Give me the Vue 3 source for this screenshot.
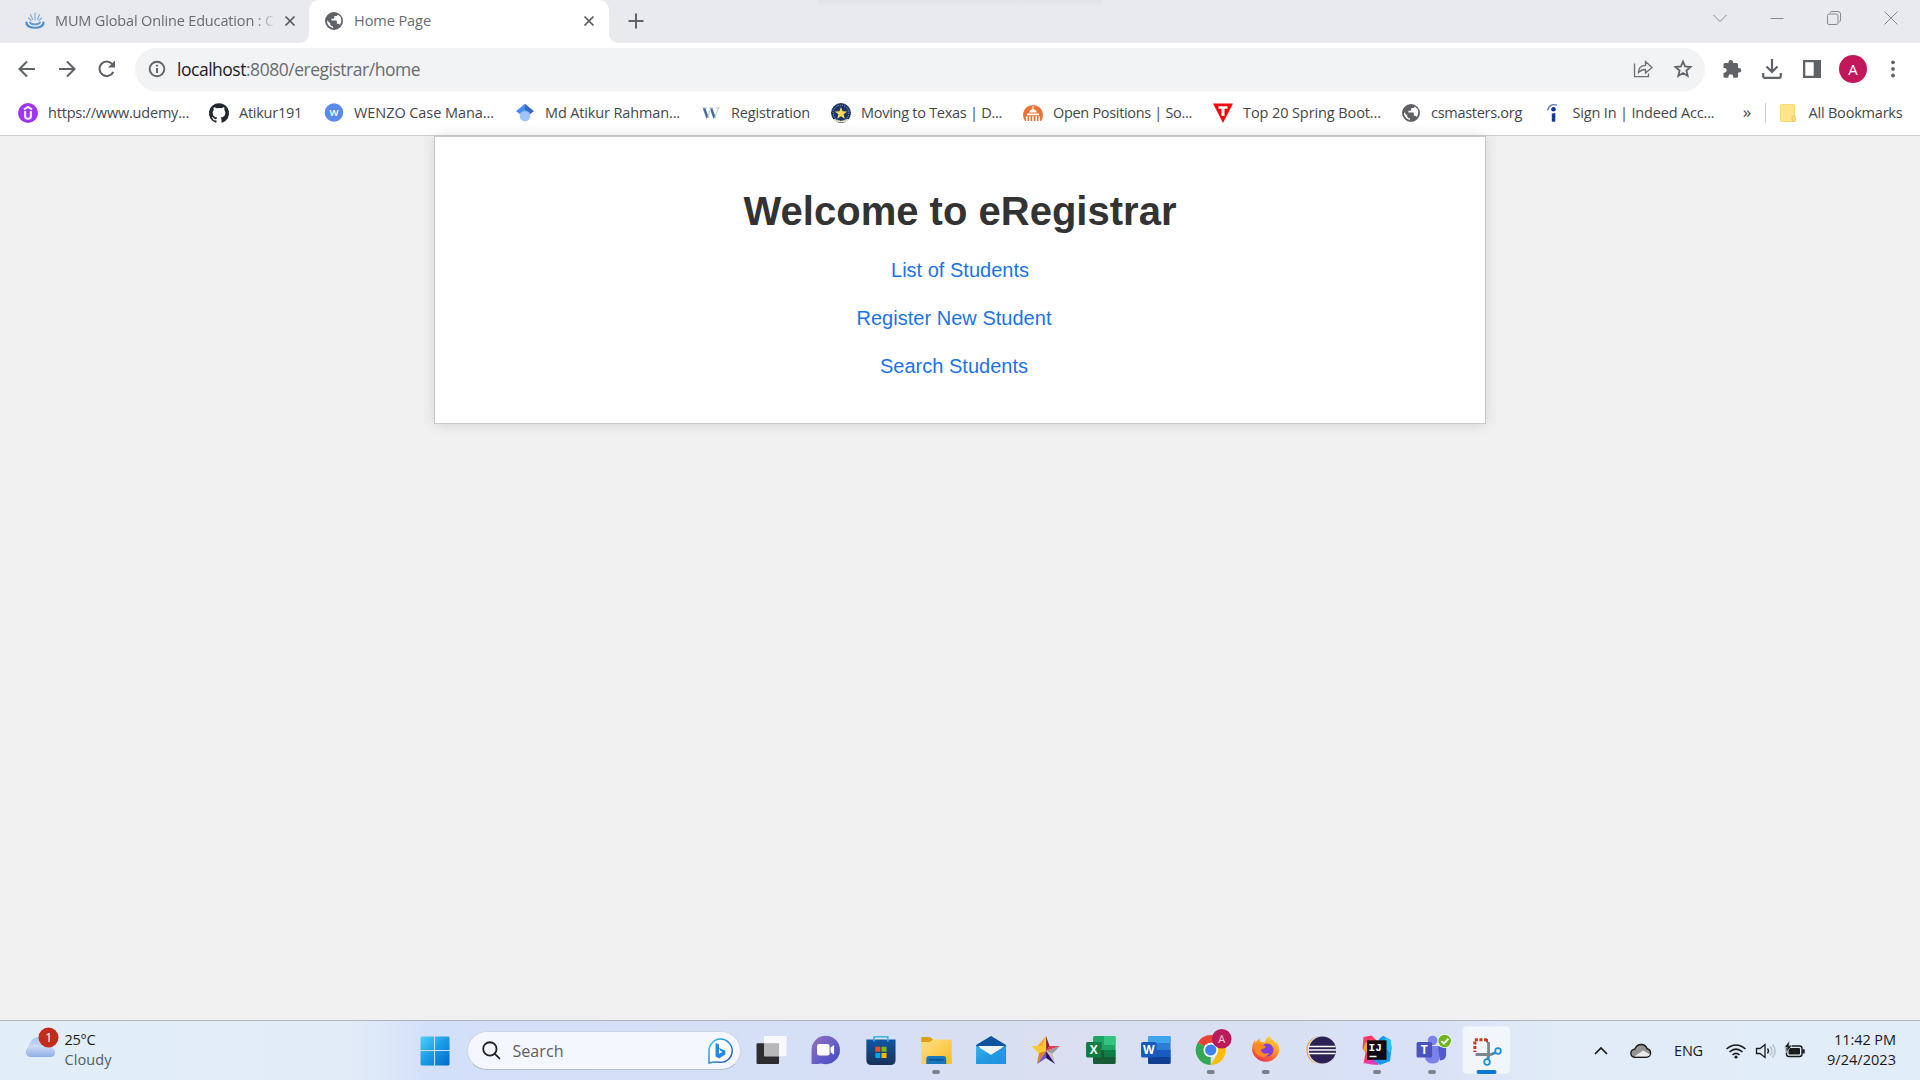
<script setup>
const fitText = (el, { value }) => {
  const range = document.createRange()
  range.selectNodeContents(el)
  const natural = range.getBoundingClientRect().width
  el.style.letterSpacing = `${(value - natural) / el.textContent.length}px`
}
const vFit = { mounted: fitText }

const bookmarks = [
  { icon: 'udemy', label: 'https://www.udemy...', text: 141, width: 191 },
  { icon: 'github', label: 'Atikur191', text: 63, width: 115 },
  { icon: 'wenzo', label: 'WENZO Case Mana...', text: 140, width: 191 },
  { icon: 'scholar', label: 'Md Atikur Rahman...', text: 135, width: 186 },
  { icon: 'w', label: 'Registration', text: 79, width: 130 },
  { icon: 'texas', label: 'Moving to Texas | D...', text: 141, width: 192 },
  { icon: 'capitol', label: 'Open Positions | So...', text: 139, width: 190 },
  { icon: 'top', label: 'Top 20 Spring Boot...', text: 138, width: 188 },
  { icon: 'globe', label: 'csmasters.org', text: 91, width: 141.5 },
  { icon: 'indeed', label: 'Sign In | Indeed Acc...', text: 142, width: 196 },
]
const links = [
  { label: 'List of Students', text: 138, shift: 0 },
  { label: 'Register New Student', text: 195, shift: 12 },
  { label: 'Search Students', text: 148, shift: 12 },
]
const globePath =
  'M10 1a9 9 0 1 0 0 18 9 9 0 0 0 0-18zM3 9.3l3.3 3.2v1.1c0 .8.8 1.6 1.7 1.6h1v1.7A7 7 0 0 1 3 9.3zM15.7 14c-.4-.8-1-1.2-1.8-1.2h-1v-2.4c0-.5-.4-.9-.9-.9H7.4V7.700h2c.5 0 .9-.4.9-.9V5h1.800c.9 0 1.700-.8 1.700-1.600A7 7 0 0 1 15.700 14z'
</script>

<template>
  <div class="screen">
    <header class="tabs">
      <div class="tab first">
        <svg class="fav" viewBox="0 0 20 20" width="20" height="20">
          <g fill="none" stroke="#7fb0dc" stroke-width="1.2" stroke-linecap="round">
            <path d="M10 9V2M7.600 8.500 5.500 3.500M12.400 8.500l2.100-5M6 9.500 3.500 7M14 9.500 16.500 7" />
            <path d="M5 11.500c1.500 2.500 8.500 2.500 10 0" stroke="#5c9bd4" stroke-width="1.800" />
            <path d="M1.500 11.500C1 18.500 19 18.500 18.500 11.500" stroke="#4a90cf" stroke-width="2.200" />
          </g>
        </svg>
        <span class="tabtext fade" v-fit="219">MUM Global Online Education : C</span>
        <svg class="x" viewBox="0 0 12 12" width="12" height="12"><path d="M1.500 1.500l9 9M10.500 1.500l-9 9" /></svg>
      </div>
      <div class="tab active">
        <svg class="fav" viewBox="0 0 20 20" width="20" height="20"><path :d="globePath" fill="#5f6368" /></svg>
        <span class="tabtext" v-fit="77">Home Page</span>
        <svg class="x" viewBox="0 0 12 12" width="12" height="12"><path d="M1.500 1.500l9 9M10.500 1.500l-9 9" /></svg>
      </div>
      <svg class="plus" viewBox="0 0 16 16" width="16" height="16"><path d="M8 .5v15M.5 8h15" /></svg>
      <div class="winbtns">
        <svg viewBox="0 0 14 14" width="14" height="14"><path d="M.5 4 7 10.500 13.500 4" /></svg>
        <svg viewBox="0 0 14 14" width="14" height="14"><path d="M.5 7.500h13" /></svg>
        <svg viewBox="0 0 14 14" width="14" height="14"><rect x=".5" y="3" width="10.500" height="10.500" rx="1.500" /><path d="M3 1.800Q3.500.5 5 .5h6q2.500 0 2.500 2.500v6q0 1.500-1.200 2" /></svg>
        <svg viewBox="0 0 14 14" width="14" height="14"><path d="M.5.5l13 13M13.500.5l-13 13" /></svg>
      </div>
      <div class="notch"></div>
    </header>

    <div class="toolbar">
      <svg class="nav" viewBox="0 0 20 20" width="20" height="20"><path d="M18 10H3M10 2.500 2.500 10l7.500 7.500" /></svg>
      <svg class="nav" viewBox="0 0 20 20" width="20" height="20"><path d="M2 10h15M10 2.500l7.500 7.500-7.500 7.500" /></svg>
      <svg class="nav" viewBox="0 0 20 20" width="20" height="20"><path d="M16.300 13A7.300 7.300 0 1 1 15.500 5.200" /><path d="M18 1.500V8.500H11z" fill="#5f6368" stroke="none" /></svg>
      <div class="omnibox">
        <svg class="info" viewBox="0 0 18 18" width="18" height="18"><circle cx="9" cy="9" r="7.300" /><path d="M9 8v5M9 4.800v1.800" /></svg>
        <span class="url" v-fit="243"><b>localhost</b>:8080/eregistrar/home</span>
        <svg class="share" viewBox="0 0 20 20" width="20" height="20"><path d="M1.500 4.500V17.700H15.500V14.500" /><path d="M5.500 13.500C5.500 8.500 8 6.500 12.500 6.300V2.500L19 8.500 12.500 14V10.500C9.500 10.500 7.500 11.200 5.500 13.500z" /></svg>
        <svg class="star" viewBox="0 0 20 20" width="20" height="20"><path d="M10 2.500l2.100 5 5.500.5-4.200 3.600 1.300 5.300L10 14.100l-4.700 2.800 1.300-5.300L2.400 8l5.500-.5z" /></svg>
      </div>
      <div class="actions">
        <svg viewBox="0 0 20 20" width="20" height="20"><path fill="#5f6368" d="M1.500 5.500q0-1.500 1.500-1.500h3.500V3.200a2.300 2.300 0 0 1 4.600 0V4h3.500q1.500 0 1.500 1.500V9h.9a2.300 2.300 0 0 1 0 4.600h-.9v3.600q0 1.500-1.500 1.500h-3.400v-1a2.400 2.400 0 0 0-4.800 0v1H3q-1.500 0-1.500-1.500v-3.500h.8a2.400 2.400 0 0 0 0-4.800h-.8z" /></svg>
        <svg viewBox="0 0 20 20" width="20" height="20"><path d="M10 0v12M4.500 7.500 10 13l5.500-5.500M1.200 14v3q0 1.800 1.800 1.800h14q1.800 0 1.800-1.800v-3" fill="none" stroke="#5f6368" stroke-width="2.200" /></svg>
        <svg viewBox="0 0 20 20" width="20" height="20"><path fill="#5f6368" fill-rule="evenodd" d="M1 1h18v18H1zM3.300 3.300v13.400h8.400V3.300z" /></svg>
        <span class="avatar">A</span>
        <svg viewBox="0 0 20 20" width="20" height="20" fill="#5f6368"><circle cx="10" cy="3.300" r="1.900" /><circle cx="10" cy="9.900" r="1.900" /><circle cx="10" cy="16.500" r="1.900" /></svg>
      </div>
    </div>

    <nav class="bookmarks">
      <div v-for="b in bookmarks" :key="b.icon" class="bookmark" :style="{ width: b.width + 'px' }">
        <svg viewBox="0 0 20 20" width="20" height="20">
          <template v-if="b.icon === 'udemy'">
            <circle cx="10" cy="10" r="10" fill="#a034f0" />
            <path d="M6 6.500 10 4l4 2.500M7.200 8v5.500q0 2.300 2.800 2.300t2.800-2.300V8" fill="none" stroke="#fff" stroke-width="2" />
          </template>
          <path v-else-if="b.icon === 'github'" fill="#24292f" d="M10 .2a10 10 0 0 0-3.200 19.500c.5.1.7-.2.7-.5v-1.800c-2.700.6-3.400-1.200-3.400-1.200-.4-1.100-1.100-1.500-1.100-1.500-.9-.6.1-.6.1-.6 1 .1 1.500 1 1.500 1 .9 1.600 2.400 1.100 3 .9.100-.7.300-1.100.6-1.400-2.200-.3-4.500-1.100-4.500-5 0-1.100.4-2 1-2.700-.1-.2-.4-1.200.1-2.600 0 0 .8-.3 2.700 1a9.400 9.400 0 0 1 5 0c1.900-1.300 2.700-1 2.700-1 .5 1.400.2 2.400.1 2.600.6.700 1 1.600 1 2.700 0 3.900-2.300 4.700-4.500 5 .4.300.7.900.7 1.900v2.700c0 .3.200.6.700.5A10 10 0 0 0 10 .2z" />
          <template v-else-if="b.icon === 'wenzo'">
            <circle cx="10" cy="9.500" r="9.300" fill="#5b8bea" />
            <text x="10" y="13" text-anchor="middle" font-size="9.500" font-weight="600" fill="#fff">W</text>
          </template>
          <template v-else-if="b.icon === 'scholar'">
            <path d="M1 8.200 10 .8v14z" fill="#4b8bf4" />
            <path d="M19 8.200 10 .8v14z" fill="#356ac3" />
            <circle cx="10" cy="13" r="5.400" fill="#a0c3ff" />
            <path d="M5 11a5.500 5.500 0 0 1 10 0c-1.500-3.500-8-3.500-10 0z" fill="#76a7fa" />
          </template>
          <g v-else-if="b.icon === 'w'" fill="none">
            <path d="M3 5 6.500 15M10 5l3.500 10" stroke="#4d6d97" stroke-width="2.500" />
            <path d="M6.500 15 9.500 6M13.500 15l4-10M1 5h5M8.500 5h4M15 5h4" stroke="#b9c6d6" stroke-width="1" />
          </g>
          <template v-else-if="b.icon === 'texas'">
            <circle cx="10" cy="10" r="9.400" fill="#19366d" stroke="#17294e" />
            <circle cx="10" cy="10" r="7.800" fill="none" stroke="#a9b3c6" stroke-dasharray="1 1.200" />
            <path d="M3 16.500Q10 21 17 16.500" fill="none" stroke="#e4dfbb" stroke-width="1.700" />
            <path d="M10 4l1.600 4.200 4.600.2-3.600 2.900 1.200 4.400L10 13.200l-3.800 2.500 1.200-4.400-3.600-2.900 4.600-.2z" fill="#f9d85c" />
          </template>
          <template v-else-if="b.icon === 'capitol'">
            <path d="M2 18A10 10 0 1 1 18 18z" fill="#ed7135" />
            <path d="M9.500 3h1v3q3 .7 3.500 3.500H6q.5-2.800 3.500-3.500zM4 10.500h12v1.800H4zM3 13.300h1.500V18H3zM6 13.300h1.500V18H6zM9.200 13.300h1.500V18H9.200zM12.400 13.300h1.500V18h-1.500zM15.500 13.300H17V18h-1.500z" fill="#fff" />
          </template>
          <template v-else-if="b.icon === 'top'">
            <path d="M0 .5h20L10 20z" fill="#f4070d" />
            <path d="M5.500 3.200h9v2.600h-3V13h-3V5.800h-3z" fill="#fff" />
          </template>
          <path v-else-if="b.icon === 'globe'" :d="globePath" fill="#5f6368" />
          <g v-else-if="b.icon === 'indeed'" fill="#12389a">
            <circle cx="10.500" cy="6.300" r="2.300" />
            <path d="M8.800 10.300q1.800.5 3.500-.6v8.500q-1.700 1-3.500 0z" />
            <path d="M4.500 7.500Q6.500 0 14 2.200" fill="none" stroke="#5878b0" stroke-width="1.300" />
          </g>
        </svg>
        <span v-fit="b.text">{{ b.label }}</span>
      </div>
      <span class="more">»</span>
      <i class="sep"></i>
      <svg class="folder" viewBox="0 0 16 18" width="16" height="18"><rect x=".5" y=".5" width="14" height="17" rx="1" fill="#ffe48a" stroke="#f5d978" /><rect x="12" y="12" width="3.500" height="5.500" rx="1.500" fill="#ffdf72" stroke="#e3bd48" stroke-width=".7" /></svg>
      <span v-fit="94">All Bookmarks</span>
    </nav>

    <main class="page">
      <section class="card">
        <h1 v-fit="433">Welcome to eRegistrar</h1>
        <p v-for="l in links" :key="l.label" :style="{ paddingRight: l.shift + 'px' }"><a v-fit="l.text">{{ l.label }}</a></p>
      </section>
    </main>

    <footer class="taskbar">
      <div class="weather">
        <svg viewBox="0 0 34 34" width="34" height="34">
          <defs>
            <linearGradient id="cl" x2="0" y2="1"><stop stop-color="#a9c3ee" /><stop offset="1" stop-color="#d5e2f8" /></linearGradient>
            <linearGradient id="cl2" x2="0" y2="1"><stop stop-color="#d5e2f8" /><stop offset="1" stop-color="#8faee6" /></linearGradient>
          </defs>
          <path d="M5 22a6 6 0 0 1 1-6 9.500 9.500 0 0 1 17-1q7 2 6 9z" fill="url(#cl)" />
          <path d="M6 30a5.500 5.500 0 0 1 1-10.800q5-3.500 9 .5 3-2 6 .8h4q5 .5 5 5 0 4-4 4.500z" fill="url(#cl2)" />
          <circle cx="24.500" cy="10.500" r="10" fill="#c42b1c" />
          <text x="24.600" y="15.300" text-anchor="middle" font-size="13" fill="#fff">1</text>
        </svg>
        <div class="forecast"><span v-fit="31">25°C</span><em v-fit="47">Cloudy</em></div>
      </div>

      <svg class="start" viewBox="0 0 30 30" width="30" height="30">
        <defs><linearGradient id="win" x2="1" y2="1"><stop stop-color="#4cd2fb" /><stop offset=".5" stop-color="#1c9ae6" /><stop offset="1" stop-color="#0068c8" /></linearGradient></defs>
        <path fill="url(#win)" d="M1.500.5H14V14H.5V1.500zM15 .5h13.500l1 1V14H15zM.5 15H14v14.500H1.500l-1-1zM15 15h14.500v13.500l-1 1H15z" />
      </svg>

      <div class="search">
        <svg viewBox="0 0 20 20" width="19" height="19"><circle cx="8.300" cy="8.300" r="7" /><path d="M13.300 13.300l5.500 5.500" /></svg>
        <span v-fit="51">Search</span>
        <svg class="bing" viewBox="0 0 26 26" width="26" height="26">
          <defs><linearGradient id="bing" x2="1" y2="1"><stop stop-color="#2fc5f2" /><stop offset="1" stop-color="#2050b8" /></linearGradient></defs>
          <path d="M2 25.000V13A11.600 11.600 0 1 1 13.500 24.300Q7 23.500 2 25z" fill="#fff" stroke="url(#bing)" stroke-width="1.500" />
          <path d="M8.500 5l3.500 1.300v9.500l3.500-1.800-2.300-1.200-1.300-3 6.500 3v3.600L12 20.500l-3.500-2z" fill="#258be0" />
        </svg>
      </div>

      <div class="apps">
        <svg viewBox="0 0 55 59">
          <rect x="13.500" y="22.300" width="22.500" height="20.700" rx="1" fill="#2d2d2f" />
          <rect x="21" y="15" width="22.500" height="20.300" rx="1" fill="#fff" opacity=".82" />
          <rect x="21" y="22.300" width="15" height="13" fill="#b8b8ba" />
        </svg>
        <svg viewBox="0 0 55 59">
          <defs><linearGradient id="chat" x2="1" y2="1"><stop stop-color="#9a70b8" /><stop offset=".5" stop-color="#6a5fc8" /><stop offset="1" stop-color="#3d48c2" /></linearGradient></defs>
          <path d="M13.500 43V29a14.200 14.200 0 1 1 14.500 14.200q-2.500 0-5-.8-4 1-9.500.6z" fill="url(#chat)" />
          <rect x="19" y="23" width="12.500" height="11.500" rx="2" fill="#fff" />
          <path d="M32.500 26.500l3.500-2.500v9.800l-3.500-2.500z" fill="#fff" />
        </svg>
        <svg viewBox="0 0 55 59">
          <defs><linearGradient id="store" x2="0" y2="1"><stop stop-color="#0f58a5" /><stop offset="1" stop-color="#173158" /></linearGradient></defs>
          <path d="M13.300 18.500h29.200V39q0 5-5 5H18.300q-5 0-5-5z" fill="url(#store)" />
          <path d="M21 20.500v-4.700h13.800v4.700" fill="none" stroke="#35b8ee" stroke-width="1.600" />
          <path d="M22.300 25.700h5v5h-5z" fill="#f25022" /><path d="M28.500 25.700h5v5h-5z" fill="#7fba00" />
          <path d="M22.300 32h5v5h-5z" fill="#00a4ef" /><path d="M28.500 32h5v5h-5z" fill="#ffb900" />
        </svg>
        <svg viewBox="0 0 55 59">
          <defs><linearGradient id="fold" x2="1" y2="1"><stop stop-color="#ffe084" /><stop offset="1" stop-color="#f8bd28" /></linearGradient></defs>
          <path d="M13.200 17q0-1 1-1H22l3.500 3v4H13.200z" fill="#dca010" />
          <path d="M13.200 21h8.500l3.500-2.500h17q1.500 0 1.500 1.500v23H13.200z" fill="url(#fold)" />
          <path d="M18.200 43v-5q0-3 3-3h14q3 0 3 3v5z" fill="#1975bd" /><path d="M21 38.800h14.500" stroke="#0b4e8e" stroke-width="1.500" />
          <rect class="dot" x="24" y="49" width="8" height="4" rx="2" />
        </svg>
        <svg viewBox="0 0 55 59">
          <defs><linearGradient id="mail" x2="1" y2="1"><stop stop-color="#35b9ef" /><stop offset="1" stop-color="#1377cc" /></linearGradient></defs>
          <path d="M13 24 28 15l15 9v3H13z" fill="#0c53a0" /><path d="M15 25h26L28 38z" fill="#f2f2f2" />
          <path d="M13 24.500 28 34l15-9.500V43H13z" fill="url(#mail)" /><path d="M13 43 43 24.500V43z" fill="#229be5" opacity=".7" />
        </svg>
        <svg viewBox="0 0 55 59">
          <path d="M28 15v15l-8.500-5z" fill="#f5a623" /><path d="M28 15l3.500 10-3.500 5z" fill="#9c1c38" />
          <path d="M28 15l-4 10 4 5z" fill="#fbc92d" /><path d="M13.700 25h10.500L28 30l-7 3z" fill="#fbc92d" /><path d="M31.500 25H42l-14 5z" fill="#e13a54" />
          <path d="M42 25l-7.500 7.500L28 30z" fill="#a09898" /><path d="M34.500 32.500 37 43l-9-13z" fill="#c8c0c0" />
          <path d="M28 30v7l9 6z" fill="#281058" /><path d="M28 30v7l-9 6z" fill="#7352d8" /><path d="M28 30l-9 13 2-11z" fill="#e08122" />
        </svg>
        <svg viewBox="0 0 55 59">
          <rect x="20" y="15" width="22.500" height="28" rx="1.500" fill="#21a366" /><path d="M31 15h10q1.500 0 1.500 1.500V24H31z" fill="#33c481" />
          <path d="M20 29h11v7H20z" fill="#185c37" /><path d="M31 29h11.500v7H31z" fill="#107c41" /><path d="M20 36h22.500v5.500q0 1.500-1.500 1.500H21.500q-1.500 0-1.500-1.500z" fill="#185c37" />
          <rect x="13" y="21" width="15.500" height="15.500" rx="1.500" fill="#107c41" /><text x="20.700" y="33" class="badge">X</text>
        </svg>
        <svg viewBox="0 0 55 59">
          <rect x="20" y="15" width="22.500" height="28" rx="1.500" fill="#2b7cd3" /><path d="M20 22v-5.500q0-1.500 1.500-1.500H41q1.500 0 1.500 1.500V22z" fill="#41a5ee" />
          <path d="M20 29h22.500v7H20z" fill="#185abd" /><path d="M20 36h22.500v5.500q0 1.500-1.500 1.500H21.500q-1.500 0-1.500-1.500z" fill="#103f91" />
          <rect x="13" y="21" width="15.500" height="15.500" rx="1.500" fill="#185abd" /><text x="20.700" y="33" class="badge">W</text>
        </svg>
        <svg viewBox="0 0 55 59">
          <path d="M27.700 29 14.700 21.500a15 15 0 0 1 26 0z" fill="#ea4335" />
          <path d="M27.700 14a15 15 0 0 1 13 7.500H27.700z" fill="#ea4335" />
          <path d="M14.700 21.500 27.700 29l0 15a15 15 0 0 1-13-22.500z" fill="#34a853" />
          <path d="M27.700 21.500h13a15 15 0 0 1-13 22.500l6.500-11z" fill="#fbbc05" />
          <circle cx="27.700" cy="29" r="7.300" fill="#fff" /><circle cx="27.700" cy="29" r="5.600" fill="#3c82f0" />
          <circle cx="38.700" cy="17.800" r="9.800" fill="#b81a5a" /><text x="38.700" y="22" text-anchor="middle" font-size="11" fill="#f4cede">A</text>
          <rect class="dot" x="23.700" y="49" width="8" height="4" rx="2" />
        </svg>
        <svg viewBox="0 0 55 59">
          <defs><linearGradient id="fox" x1=".8" y1="0" x2=".3" y2="1"><stop stop-color="#ffe23c" /><stop offset=".45" stop-color="#ff9825" /><stop offset="1" stop-color="#f0304c" /></linearGradient></defs>
          <path d="M14 29q0-6 3-10l.5 3q1-3 4-4.500l1 3.500 4 .2Q28 17 31.500 14.500q1 3.500 5 6l1.500 2.500.2-2.800q3 4 3 9.500a13.800 13.800 0 0 1-27.200-.7z" fill="url(#fox)" />
          <circle cx="29" cy="29" r="6.500" fill="#8040d8" /><path d="M17 23.500q5-1 9 1 3 1 .5 2.700l-4 1.600q2 5.500 9 3.200-6 7-12.500 1.500Q15 29.500 17 23.500z" fill="#ff8a22" />
          <rect class="dot" x="23.700" y="49" width="8" height="4" rx="2" />
        </svg>
        <svg viewBox="0 0 55 59">
          <circle cx="27" cy="29" r="13.700" fill="#f59b27" /><circle cx="28.500" cy="29" r="14" fill="#e0def0" /><circle cx="29.400" cy="29" r="13.600" fill="#2c2255" />
          <path d="M16 25.500h26.500M15.500 29h27.500M16 32.500h26.500" stroke="#fff" stroke-width="1.700" />
        </svg>
        <svg viewBox="0 0 55 59">
          <path d="M14.500 16l8-1.500 6 6-3 18-11 4 2-11-3-4z" fill="#fb3868" /><path d="M14.500 42l12-5 3 7-7-.5z" fill="#e23cba" />
          <path d="M16 22 14 29l6 4 3-15z" fill="#fca31e" />
          <path d="M30 18l4-3.300 7.500 4.300 1 8-1.500 13-10 4-7-5z" fill="#1899ee" /><path d="M36 17l5.500 2 1 8-1.500 5-6-7z" fill="#29c5f4" />
          <rect x="18" y="19.300" width="19.500" height="19.500" fill="#100b12" />
          <text x="19.500" y="29.500" font-family="'Liberation Mono', monospace" font-size="11" font-weight="700" fill="#fff">IJ</text><path d="M20.500 35.500h7" stroke="#fff" stroke-width="1.500" />
          <rect class="dot" x="24" y="49" width="8" height="4" rx="2" />
        </svg>
        <svg viewBox="0 0 55 59">
          <circle cx="28.500" cy="19.500" r="4.800" fill="#7b83eb" /><path d="M21 25h15v10q0 7.500-7 7.500t-8-6z" fill="#7b83eb" />
          <path d="M34 26h8v9q-1 4-6 4.500z" fill="#5059c9" />
          <rect x="12.500" y="21" width="15.500" height="15.500" rx="1.500" fill="#4b53bc" /><text x="20.200" y="33" class="badge">T</text>
          <circle cx="40.600" cy="20" r="7" fill="#fff" /><circle cx="40.600" cy="20" r="6.300" fill="#6fb51d" /><path d="M37.300 20l2.500 2.700 4.500-5" fill="none" stroke="#fff" stroke-width="1.800" />
          <rect class="dot" x="24" y="49" width="8" height="4" rx="2" />
        </svg>
        <svg viewBox="0 0 55 59">
          <rect x="3.500" y="5" width="48" height="48" rx="4" fill="#f1f5fc" stroke="#e3e9f5" />
          <path d="M28 18.800H15.800V31" fill="none" stroke="#c33a1c" stroke-width="3" stroke-dasharray="3 1.600" /><path d="M28 18v3.500" stroke="#c33a1c" stroke-width="2" />
          <path d="M29.500 21v14l-1 3M16.500 33.500h15l5-1.800" fill="none" stroke="#80868e" stroke-width="2.800" />
          <g fill="none" stroke="#1a92d8" stroke-width="1.800"><circle cx="39" cy="30" r="2.800" /><circle cx="28" cy="41" r="2.800" /><path d="M36.500 31.500 33 33M29 38.500l.8-3" /></g>
          <rect x="17.500" y="49" width="20" height="4" rx="2" fill="#0a78d0" />
        </svg>
      </div>

      <div class="tray">
        <svg viewBox="0 0 14 20" width="14" height="20"><path d="M1 13l6-6 6 6" stroke-width="1.700" /></svg>
        <svg class="od" viewBox="0 0 22 20" width="22" height="20"><path d="M5 16.200a4 4 0 0 1-.3-8Q7 3 12 3.500q4 .5 5 4.200 4 .8 3.500 5-.7 3.500-4 3.500z" fill="#949494" stroke-width="1.400" /><path d="M4.500 15.500 13 9.500l7 4q-1 2-3.500 2z" fill="#eceaea" stroke="none" /></svg>
        <span class="eng" v-fit="29">ENG</span>
        <svg class="wifi" viewBox="0 0 22 20" width="22" height="20"><path d="M1.500 8q9.500-8 19 0M4.500 11q6.500-5.700 13 0M7.500 14q3.500-3.200 7 0" stroke-width="1.500" /><circle cx="11" cy="16" r="1.600" fill="#1a1a1a" stroke="none" /></svg>
        <svg class="vol" viewBox="0 0 22 20" width="22" height="20"><path d="M1.500 7.500h3.500L10 3.500v13L5 12.500H1.500zM12.500 7.500q2 2.500 0 5" stroke-width="1.300" /><path d="M15 5.500q4 4.500 0 9M17.500 3.500q5.500 6.500 0 13" stroke="#b1bdc9" stroke-width="1.300" /></svg>
        <svg class="bat" viewBox="0 0 22 20" width="22" height="20"><rect x="2.500" y="5" width="15.500" height="10.500" rx="2.500" stroke-width="1.400" /><rect x="4.500" y="7" width="11.500" height="6.500" rx="1" fill="#1a1a1a" stroke="none" /><path d="M19.500 8.300v4.200" stroke-width="2.400" /><path d="M5.500-.5.300 6.500h3L1.800 12 8 4.800H5z" fill="#1a1a1a" stroke="#e2edf8" stroke-width=".6" /></svg>
        <div class="clock"><span v-fit="62">11:42 PM</span><span v-fit="69">9/24/2023</span></div>
      </div>
    </footer>
  </div>
</template>

<style>
body { margin: 0; overflow: hidden; }
</style>

<style scoped>
.screen { width: 1920px; height: 1080px; display: flex; flex-direction: column; background: #f0f0f0; font-family: "Open Sans", "Noto Sans", sans-serif; font-size: 14.5px; color: #44474a; overflow: hidden; white-space: nowrap; }
svg { display: block; flex: none; overflow: visible; }
.tabs { position: relative; height: 43px; flex: none; display: flex; background: #e8eaed; }
.notch { position: absolute; left: 818px; top: 0; width: 284px; height: 7px; background: linear-gradient(#e2e4e7, #e8eaed); }
.tab { position: relative; box-sizing: border-box; height: 43px; display: flex; align-items: center; padding-bottom: 1px; color: #686c70; }
.first { width: 309px; padding-left: 25px; }
.active { width: 300px; padding-left: 15px; background: #fff; border-radius: 10px 10px 0 0; }
.active::before, .active::after { content: ""; position: absolute; bottom: 0; width: 10px; height: 10px; }
.active::before { left: -10px; background: radial-gradient(circle at 0 0, #e8eaed 9.5px, #fff 10.5px); }
.active::after { right: -10px; background: radial-gradient(circle at 100% 0, #e8eaed 9.5px, #fff 10.5px); }
.fav { margin-right: 10px; }
.tabtext { flex: 1; padding-bottom: 2px; }
.fade { -webkit-mask-image: linear-gradient(90deg, #000 200px, transparent 221px); mask-image: linear-gradient(90deg, #000 200px, transparent 221px); }
.x { fill: none; stroke: #55595d; stroke-width: 1.7; margin-right: 14.5px; }
.first .x { margin-right: 13px; }
.plus { margin: 13px 0 0 19px; fill: none; stroke: #5f6368; stroke-width: 2; }
.winbtns { margin: 11px 22px 0 auto; display: flex; gap: 43px; fill: none; stroke: #85888c; stroke-width: 1; }
.toolbar { height: 52px; flex: none; display: flex; align-items: center; background: #fff; }
.nav { margin-left: 17px; fill: none; stroke: #5f6368; stroke-width: 2.1; }
.nav + .nav { margin-left: 20px; }
.omnibox { box-sizing: border-box; width: 1570px; height: 43px; margin-left: 18px; display: flex; align-items: center; padding: 0 12px 0 13px; border-radius: 22px; background: #f1f3f4; }
.info { fill: none; stroke: #5f6368; stroke-width: 1.9; }
.url { flex: 1; margin-left: 11px; font-size: 17.5px; color: #686c70; }
.url b { font-weight: 400; color: #202124; }
.share { fill: none; stroke: #6b6f73; stroke-width: 1.3; margin-right: 20px; }
.star { fill: none; stroke: #5f6368; stroke-width: 1.8; }
.actions { display: flex; align-items: center; margin-left: 17px; gap: 20px; }
.avatar { width: 28px; height: 28px; margin: 0 -4px 0 -3px; border-radius: 50%; background: #c2185b; color: #fff; text-align: center; line-height: 28px; font-size: 15px; }
.bookmarks { box-sizing: border-box; height: 41px; flex: none; display: flex; align-items: center; padding: 0 0 5px 18px; background: #fff; border-bottom: 1px solid #cfcfcf; }
.bookmark { flex: none; display: flex; align-items: center; gap: 10px; }
.more { width: 17px; margin-right: 9px; font-size: 17px; line-height: 20px; text-align: center; margin-top: -2px; }
.sep { width: 1px; height: 20px; background: #c9ccd0; }
.folder { margin: 0 13px 0 14px; }
.page { flex: 1; min-height: 0; }
.card { box-sizing: border-box; width: 1052px; height: 288px; margin: 0 auto; padding-top: 50px; background: #fff; border: 1px solid #c8c8c8; box-shadow: 0 0 12px rgba(0, 0, 0, .12); font-family: "Liberation Sans", Arial, sans-serif; text-align: center; }
h1 { margin: 0 0 12px; font-size: 40px; line-height: 48px; font-weight: 700; color: #333; }
p { margin: 0; height: 48px; line-height: 46px; font-size: 20px; color: #1a73e8; }
.taskbar { box-sizing: border-box; height: 60px; flex: none; display: flex; align-items: center; border-top: 1px solid #aeb4bd; background: linear-gradient(90deg, #e1eef7 0, #e2ecf8 350px, #d3e0f9 430px, #d5dff6 800px, #dadff1 1050px, #d8e1f6 1420px, #e1ecf8 1560px, #e1edf9 100%); }
.weather { width: 395.5px; padding-left: 24px; display: flex; align-items: center; gap: 6.5px; }
.weather svg { margin-top: -13px; }
.forecast { margin-top: -2px; }
.weather span, .weather em { display: block; font-style: normal; line-height: 20px; color: #1a1a1a; }
.weather em { color: #555b62; }
.start { margin-right: 17px; }
.search { box-sizing: border-box; width: 274px; height: 39px; display: flex; align-items: center; padding: 0 7px 0 14px; border-radius: 20px; background: #f4f7fd; border: 1px solid #cdd5e6; border-bottom-color: #b6bdcb; font-size: 16px; color: #5b5e63; }
.search svg { fill: none; stroke: #222; stroke-width: 1.9; }
.search span { flex: 1; margin-left: 12px; }
.search .bing { stroke: none; }
.apps { display: flex; margin-left: 2px; }
.apps svg { width: 55.1px; height: 59px; }
.dot { fill: #7b828e; }
.badge { font-size: 12px; font-weight: 700; fill: #fff; text-anchor: middle; }
.tray { margin-left: auto; padding-right: 24px; display: flex; align-items: center; color: #1a1a1a; }
.tray svg { fill: none; stroke: #1a1a1a; }
.od { margin-left: 22px; }
.eng { width: 29px; margin: 0 22px 0 22px; padding-bottom: 1px; }
.vol { margin-left: 8px; }
.bat { margin-left: 7px; }
.clock { width: 70px; margin: -2px 0 0 20px; display: flex; flex-direction: column; align-items: flex-end; line-height: 20px; }
</style>
